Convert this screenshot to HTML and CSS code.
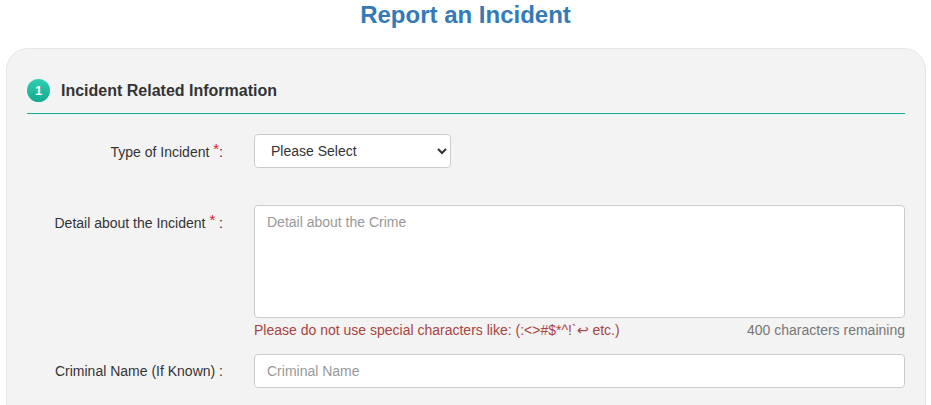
FILE: index.html
```html
<!DOCTYPE html>
<html lang="en">
<head>
  <meta charset="UTF-8" />
  <meta name="viewport" content="width=device-width, initial-scale=1.0" />
  <title>Report an Incident</title>
  <link rel="stylesheet" href="styles.css">
</head>
<body>
  <h1 class="page-title">Report an Incident</h1>

  <div class="card">
    <div class="section-head">
      <span class="step">1</span>
      <h2>Incident Related Information</h2>
    </div>

    <div class="form-row row-select">
      <label for="incidentType">Type of Incident <span class="req">*</span>:</label>
      <div class="field">
        <select id="incidentType" class="select-box">
          <option>Please Select</option>
        </select>
      </div>
    </div>

    <div class="form-row row-detail">
      <label for="incidentDetail">Detail about the Incident <span class="req">*</span> :</label>
      <div class="field">
        <textarea id="incidentDetail" class="text-box" placeholder="Detail about the Crime"></textarea>
        <div class="hint">
          <span class="hint-error">Please do not use special characters like: (:&lt;&gt;#$*^!`&#8617; etc.)</span>
          <span class="hint-count">400 characters remaining</span>
        </div>
      </div>
    </div>

    <div class="form-row row-name">
      <label for="criminalName">Criminal Name (If Known) :</label>
      <div class="field">
        <input type="text" id="criminalName" class="input-box" placeholder="Criminal Name" />
      </div>
    </div>
  </div>
</body>
</html>
```

FILE: styles.css
```css
* {
  box-sizing: border-box;
}

body {
  margin: 0;
  font-family: 'Liberation Sans', Arial, sans-serif;
  font-size: 14px;
  color: #333;
  background: #fff;
  overflow: hidden;
}

.page-title {
  margin: 0;
  padding-top: 1px;
  height: 48px;
  text-align: center;
  color: #337ab7;
  font-size: 24px;
  font-weight: bold;
  line-height: 28px;
}

.card {
  margin: 0 5px 0 6px;
  padding: 0 20px 40px;
  min-height: 400px;
  background: #f3f3f3;
  border: 1px solid #e6e6e6;
  border-radius: 22px 22px 0 0;
}

.section-head {
  display: flex;
  align-items: center;
  gap: 11px;
  padding: 30px 0 11px;
  border-bottom: 1px solid #1ea896;
  box-shadow: 0 1px 0 #e3f6f3;
}

.step {
  width: 23px;
  height: 23px;
  border-radius: 50%;
  background: linear-gradient(180deg, #2fd0b3 0%, #13a98c 100%);
  color: #fff;
  font-size: 13px;
  font-weight: bold;
  display: flex;
  align-items: center;
  justify-content: center;
}

.section-head h2 {
  margin: 0;
  font-size: 16px;
  font-weight: bold;
  color: #333;
  line-height: 20px;
}

.form-row {
  display: grid;
  grid-template-columns: 196px 1fr;
  column-gap: 31px;
}

.form-row label {
  text-align: right;
  color: #333;
}

.req {
  color: #e02020;
  font-size: 15px;
  position: relative;
  top: -3px;
}

.row-select {
  margin-top: 20px;
  align-items: center;
}

.row-detail {
  margin-top: 37px;
}

.row-detail label {
  padding-top: 9px;
}

.row-name {
  margin-top: 14px;
  align-items: center;
}

.select-box,
.text-box,
.input-box {
  font-family: inherit;
  font-size: 14px;
  color: #333;
  background: #fff;
  border: 1px solid #ccc;
  border-radius: 4px;
  outline: none;
}

.select-box {
  width: 197px;
  height: 34px;
  padding: 0 12px;
}

.text-box {
  display: block;
  width: 100%;
  height: 113px;
  padding: 8px 12px;
  resize: none;
}

.input-box {
  display: block;
  width: 100%;
  height: 34px;
  padding: 0 12px;
}

.text-box::placeholder,
.input-box::placeholder {
  color: #999;
}

.hint {
  display: flex;
  justify-content: space-between;
  margin-top: 2px;
  line-height: 20px;
}

.hint-error {
  color: #a94442;
}

.hint-count {
  color: #777;
}
```
